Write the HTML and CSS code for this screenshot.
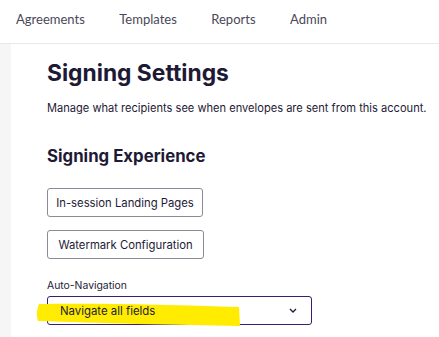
FILE: index.html
```html
<!DOCTYPE html>
<html lang="en">
<head>
<meta charset="utf-8">
<link rel="stylesheet" href="styles.css">
</head>
<body>
<nav class="topnav">
  <a class="nav-item">Agreements</a>
  <a class="nav-item">Templates</a>
  <a class="nav-item">Reports</a>
  <a class="nav-item">Admin</a>
</nav>
<div class="layout">
  <aside class="rail"></aside>
  <main class="content">
    <h1 class="title">Signing Settings</h1>
    <p class="desc">Manage what recipients see when envelopes are sent from this account.</p>
    <h2 class="subtitle">Signing Experience</h2>
    <div class="buttons">
      <button class="btn">In-session Landing Pages</button>
      <button class="btn">Watermark Configuration</button>
    </div>
    <div class="field">
      <label class="field-label">Auto-Navigation</label>
      <div class="select">
        <span class="select-value">Navigate all fields</span>
        <svg class="chevron" width="8" height="5" viewBox="0 0 8 5"><path d="M1 1 L4 4 L7 1" fill="none" stroke="#1e1a36" stroke-width="1.3"/></svg>
        <svg class="highlight" width="206" height="26" viewBox="0 0 206 26"><path d="M2 1 C60 0 140 2 202 4 L203 23 C140 22 60 20 1 18 C-1 12 0 6 2 1 Z" fill="#ffec00"/></svg>
      </div>
    </div>
  </main>
</div>
</body>
</html>
```
FILE: styles.css
```css
* { box-sizing: border-box; }
html, body { margin: 0; padding: 0; background: #fff; }
body {
  font-family: Inter, Lato, sans-serif;
  color: #1e1a36;
  width: 439px;
  height: 337px;
  overflow: hidden;
}
.topnav {
  height: 44px;
  border-bottom: 1px solid #e9e9e9;
  display: flex;
  align-items: center;
  padding-left: 16px;
  gap: 34.5px;
  padding-bottom: 5px;
  font-family: Lato, sans-serif;
}
.nav-item {
  font-size: 13px;
  color: #4a4858;
}
.layout {
  display: flex;
  height: 293px;
}
.rail {
  width: 11px;
  background: #f6f6f6;
}
.content {
  padding-left: 36px;
  padding-top: 14px;
}
.title {
  margin: 0;
  font-size: 22.8px;
  font-weight: 700;
  line-height: 30px;
}
.desc {
  margin: 12px 0 0;
  font-size: 11.1px;
  line-height: 16px;
  white-space: nowrap;
}
.subtitle {
  margin: 29px 0 0;
  font-size: 16.8px;
  font-weight: 700;
  line-height: 22px;
}
.buttons {
  display: flex;
  flex-direction: column;
  align-items: flex-start;
  gap: 13px;
  margin-top: 21px;
}
.btn {
  font-family: inherit;
  font-size: 11.3px;
  color: #1e1a36;
  background: #fff;
  border: 1px solid #8c8a94;
  border-radius: 3px;
  height: 29px;
  padding: 0;
  width: 156px;
  white-space: nowrap;
}
.btn + .btn { width: 157px; }
.field { margin-top: 20px; }
.field-label {
  display: block;
  font-size: 10.4px;
  line-height: 14px;
}
.select {
  position: relative;
  margin-top: 3px;
  width: 265px;
  height: 29px;
  border: 1px solid #3a1f6e;
  border-radius: 3px;
  display: flex;
  align-items: center;
  justify-content: space-between;
  padding: 0 14px 0 12px;
  font-size: 11.4px;
}
.select-value { position: relative; z-index: 1; }
.highlight {
  position: absolute;
  left: -11px;
  top: 6px;
  z-index: 0;
  overflow: visible;
}
```
